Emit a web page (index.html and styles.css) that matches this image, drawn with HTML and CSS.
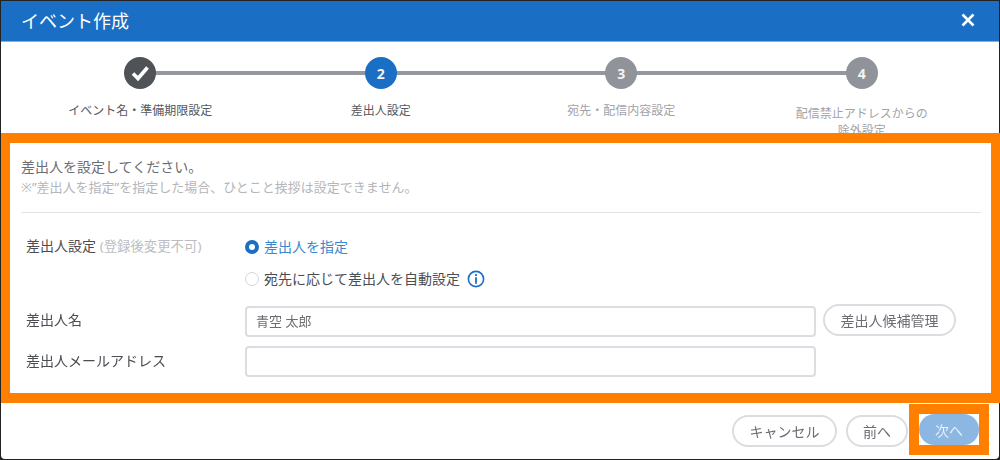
FILE: index.html
```html
<!DOCTYPE html>
<html lang="ja">
<head>
<meta charset="utf-8">
<title>イベント作成</title>
<link rel="stylesheet" href="styles.css">
</head>
<body>
<div class="modal">
  <header class="modal-header">
    <h1 class="modal-title">イベント作成</h1>
    <svg class="close-icon" width="14" height="14" viewBox="0 0 14 14" aria-label="閉じる"><path d="M1.5 1.5 12.5 12.5M12.5 1.5 1.5 12.5" fill="none" stroke="#fff" stroke-width="2.6"/></svg>
  </header>

  <ol class="steps">
    <li class="step step-done">
      <span class="step-circle"><svg width="22" height="22" viewBox="0 0 22 22"><path d="M4 11.5 9 16.5 18.5 5.5" fill="none" stroke="#fff" stroke-width="3.6"/></svg></span>
      <span class="step-label">イベント名・準備期限設定</span>
    </li>
    <li class="step step-current">
      <span class="step-circle">2</span>
      <span class="step-label">差出人設定</span>
    </li>
    <li class="step">
      <span class="step-circle">3</span>
      <span class="step-label">宛先・配信内容設定</span>
    </li>
    <li class="step">
      <span class="step-circle">4</span>
      <span class="step-label step-label-wrap">配信禁止アドレスからの<br>除外設定</span>
    </li>
  </ol>

  <section class="panel">
    <p class="lead">差出人を設定してください。</p>
    <p class="note">※”差出人を指定”を指定した場合、ひとこと挨拶は設定できません。</p>
    <hr class="divider">
    <div class="form-grid">
      <div class="field-label field-label-top">差出人設定 <span class="field-hint">(登録後変更不可)</span></div>
      <div class="radio-group">
        <div class="radio radio-on"><span class="radio-mark"></span>差出人を指定</div>
        <div class="radio"><span class="radio-mark"></span>宛先に応じて差出人を自動設定
          <svg class="info-icon" width="18" height="18" viewBox="0 0 18 18"><circle cx="9" cy="9" r="7.6" fill="none" stroke="#1a6fc4" stroke-width="1.6"/><rect x="8.1" y="4" width="1.8" height="2" fill="#1a6fc4"/><rect x="8.1" y="7.2" width="1.8" height="6.6" fill="#1a6fc4"/></svg>
        </div>
      </div>
      <div class="field-label field-label-name">差出人名</div>
      <div class="input-row">
        <div class="text-input">青空 太郎</div>
        <button class="pill pill-manage" type="button">差出人候補管理</button>
      </div>
      <div class="field-label">差出人メールアドレス</div>
      <div class="input-row">
        <div class="text-input"></div>
      </div>
    </div>
  </section>

  <footer class="modal-footer">
    <button class="pill pill-cancel" type="button">キャンセル</button>
    <button class="pill pill-prev" type="button">前へ</button>
    <div class="next-highlight"><button class="pill-next" type="button">次へ</button></div>
  </footer>
</div>
</body>
</html>
```
FILE: styles.css
```css
* { box-sizing: border-box; }
html, body { margin: 0; padding: 0; }
body {
  width: 1000px;
  height: 460px;
  overflow: hidden;
  background: #222;
  font-family: "Noto Sans", "Noto Sans CJK JP", sans-serif;
  color: #4a4d52;
}
.modal {
  width: 1000px;
  height: 460px;
  padding: 1px;
  display: flex;
  flex-direction: column;
  filter: blur(0.35px);
}
.modal-header {
  height: 41px;
  background: #1a6fc4;
  border-bottom: 1px solid #7fb0e0;
  display: flex;
  align-items: center;
  justify-content: space-between;
  padding: 0 24px 2px 20px;
  flex: none;
}
.modal-title {
  margin: 0;
  font-size: 18px;
  font-weight: 400;
  color: #fff;
}
.close-icon { display: block; }
.steps {
  list-style: none;
  margin: 0;
  padding: 15px 17px 0 19px;
  height: 91px;
  flex: none;
  overflow: hidden;
  background: #fff;
  display: grid;
  grid-template-columns: repeat(4, 240.5px);
}
.step {
  position: relative;
  display: flex;
  flex-direction: column;
  align-items: center;
  color: #a0a3a8;
}
.step:not(:last-child)::after {
  content: "";
  position: absolute;
  left: 50%;
  width: 100%;
  top: 14px;
  height: 4px;
  background: #94979d;
}
.step-circle {
  position: relative;
  z-index: 1;
  width: 32px;
  height: 32px;
  border-radius: 50%;
  background: #909399;
  color: #f3f3f3;
  font-size: 14px;
  font-weight: 700;
  display: flex;
  align-items: center;
  justify-content: center;
}
.step-done .step-circle { background: #4f5256; }
.step-current .step-circle { background: #1a6fc4; }
.step-done, .step-current { color: #55585c; }
.step-label {
  font-size: 12px;
  line-height: 17px;
  margin-top: 13px;
  text-align: center;
}
.step-label-wrap { margin-top: 16px; }
.panel {
  flex: none;
  height: 270px;
  width: 999px;
  background: #fff;
  border: 10px solid #ff8000;
  border-left-width: 9px;
  border-right-width: 9px;
  padding: 14px 10px 0 11px;
}
.lead {
  margin: 0;
  font-size: 14px;
  line-height: 20px;
  color: #6a6d72;
}
.note {
  margin: 0;
  font-size: 13px;
  line-height: 20px;
  color: #b4b6ba;
}
.divider {
  border: 0;
  height: 1px;
  background: #e3e3e6;
  margin: 15px 0 0;
}
.form-grid {
  display: grid;
  grid-template-columns: 219px 1fr;
  padding: 19px 0 0 5px;
}
.field-label {
  font-size: 14px;
  line-height: 20px;
  color: #4a4d52;
  align-self: center;
}
.field-label-top { align-self: start; margin-top: 4px; }
.field-label-name { margin-top: -2px; }
.field-hint { font-size: 13.4px; color: #bbbdc1; }
.radio-group {
  display: flex;
  flex-direction: column;
  gap: 12px;
  padding: 5px 0 12px;
}
.radio {
  display: flex;
  align-items: center;
  font-size: 14px;
  line-height: 20px;
  color: #4a4d52;
}
.radio-on { color: #3b86d0; }
.radio-mark {
  width: 14px;
  height: 14px;
  margin-right: 5px;
  border-radius: 50%;
  border: 1.5px solid #d4d6da;
  background: #fff;
  flex: none;
}
.radio-on .radio-mark {
  border: 4px solid #1a6fc4;
}
.info-icon { margin-left: 7px; display: block; }
.input-row {
  display: flex;
  align-items: center;
  height: 40px;
  gap: 7px;
}
.text-input {
  width: 571px;
  height: 31px;
  border: 2px solid #dcdde1;
  border-radius: 4px;
  background: #fff;
  font-size: 13px;
  line-height: 27px;
  padding-left: 9px;
  color: #6a6d72;
}
.pill {
  height: 32px;
  border: 2px solid #dcdde1;
  border-radius: 16px;
  background: #fff;
  font: inherit;
  font-size: 14px;
  color: #6a6d72;
  padding: 0;
}
.pill-manage { width: 133px; margin-top: -3px; }
.modal-footer {
  flex: 1;
  background: #fff;
  display: flex;
  justify-content: flex-end;
  align-items: flex-start;
  gap: 9px;
  padding: 0 10px 0 0;
  border-radius: 0 0 4px 4px;
}
.pill-cancel { width: 105px; margin-top: 12px; }
.pill-prev { width: 62px; margin-top: 12px; }
.next-highlight {
  margin-left: -8px;
  margin-top: 1px;
  border: 10px solid #ff8000;
  width: 80px;
  height: 51px;
  background: #fff;
}
.pill-next {
  display: block;
  width: 60px;
  height: 31px;
  border: 0;
  border-radius: 16px;
  background: #8cb7e2;
  color: #e9f1fa;
  font: inherit;
  font-size: 14px;
  padding: 0;
}
```
